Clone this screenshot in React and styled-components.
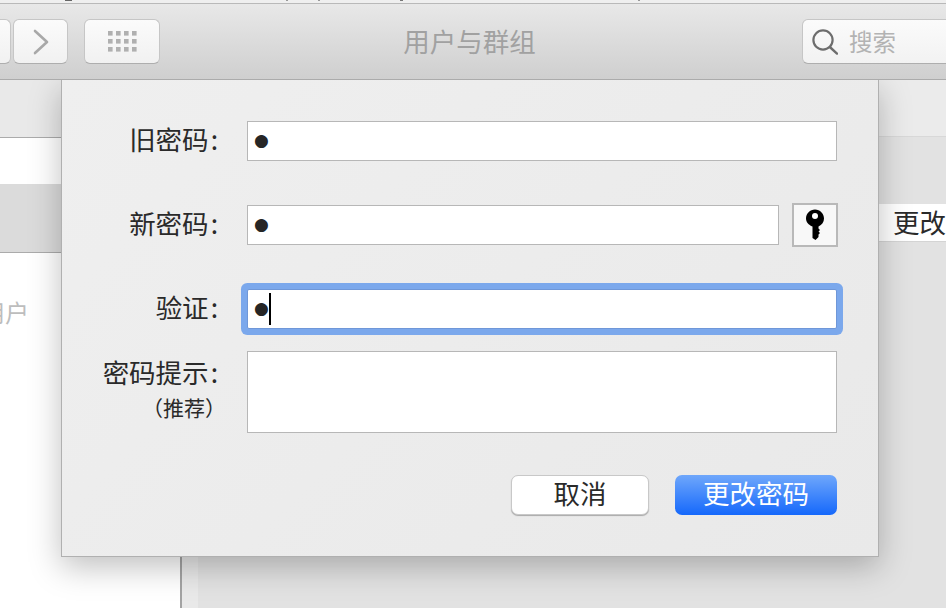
import React from 'react'
import styled, { createGlobalStyle } from 'styled-components'

const GlobalStyle = createGlobalStyle`
  html, body {
    margin: 0;
    padding: 0;
    background: #e2e2e2;
  }
  body {
    font-family: "Noto Sans CJK SC", "Noto Sans", sans-serif;
    color: #2a2a2a;
  }
`

const Page = styled.div`
  position: relative;
  width: 946px;
  height: 608px;
  overflow: hidden;
  display: flex;
  flex-direction: column;
`

const TopStrip = styled.div`
  height: 3px;
  flex: none;
  background-color: #efefef;
  background-image:
    linear-gradient(#666, #666),
    linear-gradient(#999, #999),
    linear-gradient(#999, #999),
    linear-gradient(#777, #777),
    linear-gradient(#999, #999);
  background-repeat: no-repeat;
  background-size: 7px 1px, 2px 1px, 2px 1px, 3px 1px, 2px 1px;
  background-position: 65px 0, 286px 0, 318px 0, 400px 0, 638px 0;
  border-bottom: 1px solid #b9b9b9;
`

const Toolbar = styled.header`
  position: relative;
  z-index: 3;
  flex: none;
  height: 76px;
  box-sizing: border-box;
  padding-top: 15px;
  display: flex;
  align-items: flex-start;
  overflow: hidden;
  background: linear-gradient(#e8e8e8, #cfcfcf);
  border-bottom: 1px solid #ababab;
`

const NavGroup = styled.div`
  flex: none;
  display: flex;
  gap: 2px;
  margin-left: -43px;
`

const ToolButton = styled.button`
  width: ${p => p.$width}px;
  height: 45px;
  margin: 0 0 0 ${p => p.$gap || 0}px;
  padding: 0;
  display: flex;
  align-items: center;
  justify-content: center;
  box-sizing: border-box;
  background: linear-gradient(#fbfbfb, #f1f1f1);
  border: 1px solid #c6c6c6;
  border-bottom-color: #aeaeae;
  border-radius: 6px;
`

const Title = styled.h1`
  flex: 1;
  margin: 0;
  padding-right: 23px;
  text-align: center;
  font-size: 26.5px;
  line-height: 43px;
  font-weight: 400;
  color: #a1a1a1;
`

const SearchBox = styled.div`
  flex: none;
  width: 170px;
  height: 45px;
  margin-right: -26px;
  box-sizing: border-box;
  padding-left: 9px;
  display: flex;
  align-items: center;
  gap: 11px;
  background: linear-gradient(#fbfbfb, #f2f2f2);
  border: 1px solid #c6c6c6;
  border-bottom-color: #aeaeae;
  border-radius: 6px;
`

const SearchHint = styled.span`
  font-size: 23.5px;
  line-height: 1;
  color: #b3b3b3;
`

const Body = styled.div`
  flex: 1;
  display: flex;
  min-height: 0;
`

const Sidebar = styled.aside`
  flex: none;
  width: 180px;
  background: #fff;
  border-right: 2px solid #a3a3a3;
`

const SidebarHead = styled.div`
  height: 57px;
  background: #e9e9e9;
  border-bottom: 1px solid #ababab;
  margin-right: -2px;
`

const SidebarGap = styled.div`
  height: 46px;
`

const SelectedRow = styled.div`
  height: 68px;
  background: #dbdbdb;
  border-bottom: 1px solid #ababab;
`

const GroupLabel = styled.div`
  margin: 45px 0 0 -19px;
  font-size: 24px;
  line-height: 28px;
  color: #bdbdbd;
`

const Main = styled.main`
  flex: 1;
  display: flex;
`

const Gutter = styled.div`
  flex: none;
  width: 16px;
  background: #e9e9e9;
`

const Pane = styled.div`
  flex: 1;
  display: flex;
  flex-direction: column;
  background: #e2e2e2;
`

const PaneHead = styled.div`
  height: 56px;
  background: #ebebeb;
  border-bottom: 1px solid #d8d8d8;
`

const PaneBody = styled.div`
  padding-top: 67px;
  display: flex;
  justify-content: flex-end;
`

const ChangeButton = styled.button`
  width: 200px;
  height: 38px;
  margin: 0 -117px 0 0;
  padding: 0 0 2px 30px;
  box-sizing: border-box;
  text-align: left;
  white-space: nowrap;
  overflow: hidden;
  font: inherit;
  font-size: 26.5px;
  line-height: 34px;
  color: #2a2a2a;
  background: #fff;
  border: none;
  border-bottom: 1px solid #d4d4d4;
`

const Dialog = styled.section`
  position: absolute;
  z-index: 2;
  left: 61px;
  top: 80px;
  width: 818px;
  height: 477px;
  box-sizing: border-box;
  padding: 41px 41px 0 0;
  display: flex;
  flex-direction: column;
  gap: 42px;
  background: linear-gradient(135deg, #efefef, #e9e9e9);
  border: 1px solid #b0b0b0;
  border-top: none;
  box-shadow: 0 10px 30px rgba(0, 0, 0, 0.25);
`

const Row = styled.div`
  display: grid;
  grid-template-columns: 158px 1fr;
  column-gap: 27px;
  align-items: center;
  margin-top: ${p => p.$pull || 0}px;
`

const Label = styled.label`
  text-align: right;
  font-size: 26.5px;
  line-height: 34px;
  white-space: nowrap;
  align-self: ${p => (p.$top ? 'start' : 'center')};
  padding: ${p => (p.$top ? '4px 0 0' : '0 0 4px')};
`

const Colon = styled.span`
  margin: 0 2px;
`

const LabelNote = styled.div`
  margin: 1px -6px 0 0;
  font-size: 21px;
  line-height: 34px;
`

const FieldLine = styled.div`
  display: flex;
  align-items: center;
  gap: 13px;
`

const Field = styled.div`
  flex: 1;
  height: ${p => p.$height || 40}px;
  box-sizing: border-box;
  padding-left: 6px;
  display: flex;
  align-items: center;
  background: #fff;
  border: 1px solid ${p => (p.$focused ? '#6f97d8' : '#b7b7b7')};
  ${p => p.$focused && 'box-shadow: 0 0 0 6px #7ba8ec; border-radius: 2px;'}
`

const Dot = styled.span`
  margin-top: -2px;
  font-family: "DejaVu Sans", sans-serif;
  font-size: 17px;
  line-height: 1;
  color: #262626;
`

const Caret = styled.span`
  width: 2px;
  height: 32px;
  background: #000;
`

const KeyButton = styled.button`
  flex: none;
  width: 46px;
  height: 44px;
  margin: 0 -1px 0 0;
  padding: 0;
  display: flex;
  align-items: center;
  justify-content: center;
  box-sizing: border-box;
  background: #f8f8f8;
  border: 2px solid #b9b9b9;
`

const Actions = styled.div`
  display: flex;
  justify-content: flex-end;
  gap: 26px;
`

const ActionButton = styled.button`
  width: ${p => p.$width}px;
  height: 40px;
  margin: 0;
  padding: 0 0 4px;
  box-sizing: border-box;
  font: inherit;
  font-size: 26.5px;
  line-height: 34px;
  border-radius: 7px;
  color: ${p => (p.$primary ? '#fff' : '#2a2a2a')};
  background: ${p => (p.$primary ? 'linear-gradient(#6fa7fb, #1568fb)' : '#fff')};
  border: ${p => (p.$primary ? 'none' : '1px solid #c8c8c8')};
  box-shadow: ${p => (p.$primary ? 'none' : '0 1px 1px #a9a9a9')};
`

const ChevronIcon = () => (
  <svg width="18" height="28" viewBox="0 0 18 28">
    <path d="M3 3 L15 14 L3 25" fill="none" stroke="#a8a8a8" strokeWidth="2.6" strokeLinecap="round" strokeLinejoin="round" />
  </svg>
)

const BackIcon = () => (
  <svg width="18" height="28" viewBox="0 0 18 28">
    <path d="M15 3 L3 14 L15 25" fill="none" stroke="#a8a8a8" strokeWidth="2.6" strokeLinecap="round" strokeLinejoin="round" />
  </svg>
)

const GridIcon = () => (
  <svg width="29" height="21" viewBox="0 0 29 21">
    {[0, 8, 16].map(y =>
      [0, 8, 16, 24].map(x => <rect key={`${x}-${y}`} x={x} y={y} width="4.6" height="4.6" fill="#b0b0b0" />)
    )}
  </svg>
)

const SearchIcon = () => (
  <svg width="26" height="26" viewBox="0 0 26 26">
    <circle cx="11" cy="11" r="9.6" fill="none" stroke="#6d6d6d" strokeWidth="2.2" />
    <path d="M17.8 18 L25 24.6" fill="none" stroke="#6d6d6d" strokeWidth="2.4" strokeLinecap="round" />
  </svg>
)

const KeyIcon = () => (
  <svg width="20" height="32" viewBox="0 0 20 32">
    <path
      d="M10 0.5 C15 0.5 19 4.5 19 9.5 C19 13 17 15.8 13.5 17.6 L13.5 19.5 L15 21 L13.5 22.5 L15 24 L13.5 25.6 L13.5 28 L10.5 31 L7.5 29 L7.5 17.6 C3.5 15.8 1 13 1 9.5 C1 4.5 5 0.5 10 0.5 Z"
      fill="#000"
    />
    <circle cx="10" cy="7" r="3" fill="#fff" />
  </svg>
)

export default function App() {
  return (
    <>
      <GlobalStyle />
      <Page>
        <TopStrip />
        <Toolbar>
          <NavGroup>
            <ToolButton $width={54}><BackIcon /></ToolButton>
            <ToolButton $width={55}><ChevronIcon /></ToolButton>
          </NavGroup>
          <ToolButton $width={76} $gap={16}><GridIcon /></ToolButton>
          <Title>用户与群组</Title>
          <SearchBox>
            <SearchIcon />
            <SearchHint>搜索</SearchHint>
          </SearchBox>
        </Toolbar>
        <Body>
          <Sidebar>
            <SidebarHead />
            <SidebarGap />
            <SelectedRow />
            <GroupLabel>用户</GroupLabel>
          </Sidebar>
          <Main>
            <Gutter />
            <Pane>
              <PaneHead />
              <PaneBody>
                <ChangeButton>更改密码…</ChangeButton>
              </PaneBody>
            </Pane>
          </Main>
        </Body>
        <Dialog>
          <Row>
            <Label>旧密码<Colon>:</Colon></Label>
            <Field><Dot>●</Dot></Field>
          </Row>
          <Row>
            <Label>新密码<Colon>:</Colon></Label>
            <FieldLine>
              <Field><Dot>●</Dot></Field>
              <KeyButton><KeyIcon /></KeyButton>
            </FieldLine>
          </Row>
          <Row>
            <Label>验证<Colon>:</Colon></Label>
            <Field $focused><Dot>●</Dot><Caret /></Field>
          </Row>
          <Row $pull={-20}>
            <Label $top>
              密码提示<Colon>:</Colon>
              <LabelNote>&#xFF08;推荐&#xFF09;</LabelNote>
            </Label>
            <Field $height={82} />
          </Row>
          <Actions>
            <ActionButton $width={138}>取消</ActionButton>
            <ActionButton $width={162} $primary>更改密码</ActionButton>
          </Actions>
        </Dialog>
      </Page>
    </>
  )
}
